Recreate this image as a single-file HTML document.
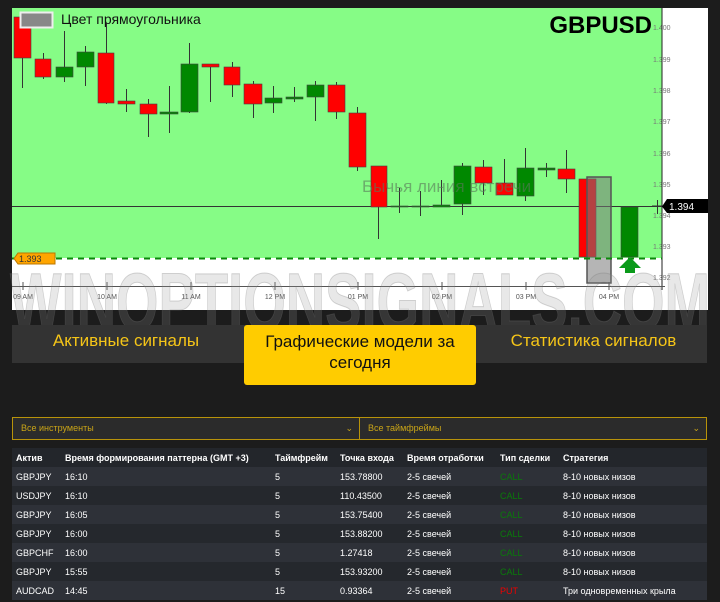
<!DOCTYPE html>
<html><head><meta charset="utf-8"><style>
*{margin:0;padding:0;box-sizing:border-box}
body{width:720px;height:602px;background:#1c1c1c;font-family:"Liberation Sans","DejaVu Sans",sans-serif;position:relative;overflow:hidden}
.abs{position:absolute}
.tabbar{left:12px;top:325px;width:695px;height:38px;background:#333}
.tab{color:#f5c518;font-size:17px;text-align:center}
.sel{top:417px;height:23px;background:#2b2b2b;border:1px solid #b8930a;color:#c9a417;font-size:9px;line-height:21px;padding-left:8px}
.sel span{position:absolute;right:6px;top:0;font-size:9px}
table{position:absolute;left:12px;top:448px;width:695px;border-collapse:collapse;font-size:9px;color:#fff}
td,th{height:19px;text-align:left;padding:0 0 0 4px;white-space:nowrap}
th{font-weight:bold;background:#23262b}
tr:nth-child(even) td{background:#2e3138}
tr:nth-child(odd) td{background:#25282d}
.c{color:#0a7a0a}.p{color:#e00}
</style></head><body>
<svg class="abs" style="left:0;top:0" width="720" height="320">
<rect x="12" y="8" width="696" height="302" fill="#fff"/>
<rect x="12" y="8" width="650" height="250" fill="#86fc86"/>
<g font-family="Liberation Sans" font-size="7" fill="#777">
<text x="653" y="30">1.400</text><text x="653" y="62">1.399</text><text x="653" y="93">1.398</text><text x="653" y="124">1.397</text><text x="653" y="156">1.396</text><text x="653" y="187">1.395</text><text x="653" y="218">1.394</text><text x="653" y="249">1.393</text><text x="653" y="280">1.392</text>
</g>
<line x1="662" y1="8" x2="662" y2="290" stroke="#222" stroke-width="1"/>
<line x1="12" y1="286.5" x2="665" y2="286.5" stroke="#555"/>
<g stroke="#555"><line x1="23" y1="282" x2="23" y2="290"/><line x1="107" y1="282" x2="107" y2="290"/><line x1="191" y1="282" x2="191" y2="290"/><line x1="275" y1="282" x2="275" y2="290"/><line x1="358" y1="282" x2="358" y2="290"/><line x1="442" y1="282" x2="442" y2="290"/><line x1="526" y1="282" x2="526" y2="290"/><line x1="609" y1="282" x2="609" y2="290"/></g>
<g font-family="Liberation Sans" font-size="7" fill="#555" text-anchor="middle">
<text x="23" y="299">09 AM</text><text x="107" y="299">10 AM</text><text x="191" y="299">11 AM</text><text x="275" y="299">12 PM</text><text x="358" y="299">01 PM</text><text x="442" y="299">02 PM</text><text x="526" y="299">03 PM</text><text x="609" y="299">04 PM</text>
</g>
<line x1="12" y1="206.5" x2="662" y2="206.5" stroke="#333" stroke-width="1"/>
<g stroke="#333" stroke-width="1">
<line x1="22.5" y1="17" x2="22.5" y2="88"/><line x1="43.5" y1="53" x2="43.5" y2="79"/><line x1="64.5" y1="31" x2="64.5" y2="82"/><line x1="85.5" y1="46" x2="85.5" y2="86"/><line x1="106.5" y1="23" x2="106.5" y2="104"/><line x1="126.5" y1="89" x2="126.5" y2="112"/><line x1="148.5" y1="99" x2="148.5" y2="137"/><line x1="169.5" y1="86" x2="169.5" y2="133"/><line x1="189.5" y1="43" x2="189.5" y2="113"/><line x1="210.5" y1="64" x2="210.5" y2="102"/><line x1="232.5" y1="62" x2="232.5" y2="97"/><line x1="253.5" y1="81" x2="253.5" y2="118"/><line x1="273.5" y1="86" x2="273.5" y2="113"/><line x1="294.5" y1="87" x2="294.5" y2="102"/><line x1="315.5" y1="81" x2="315.5" y2="121"/><line x1="336.5" y1="82" x2="336.5" y2="119"/><line x1="357.5" y1="107" x2="357.5" y2="171"/><line x1="378.5" y1="166" x2="378.5" y2="239"/><line x1="399.5" y1="188" x2="399.5" y2="213"/><line x1="420.5" y1="191" x2="420.5" y2="216"/><line x1="441.5" y1="180" x2="441.5" y2="207"/><line x1="462.5" y1="163" x2="462.5" y2="215"/><line x1="483.5" y1="160" x2="483.5" y2="195"/><line x1="504.5" y1="159" x2="504.5" y2="195"/><line x1="525.5" y1="148" x2="525.5" y2="201"/><line x1="546.5" y1="163" x2="546.5" y2="177"/><line x1="566.5" y1="150" x2="566.5" y2="193"/><line x1="657.5" y1="200" x2="657.5" y2="214"/>
<line x1="652" y1="206" x2="662" y2="206"/>
</g>
<g stroke="#444" stroke-width="0.6">
<rect x="14" y="17" width="17" height="41" fill="#f00"/><rect x="35" y="59" width="16" height="18" fill="#f00"/><rect x="56" y="67" width="17" height="10" fill="#080"/><rect x="77" y="52" width="17" height="15" fill="#080"/><rect x="98" y="53" width="16" height="50" fill="#f00"/><rect x="118" y="101" width="17" height="3" fill="#f00"/><rect x="140" y="104" width="17" height="10" fill="#f00"/><rect x="160" y="112" width="18" height="2" fill="#080"/><rect x="181" y="64" width="17" height="48" fill="#080"/><rect x="202" y="64" width="17" height="3" fill="#f00"/><rect x="224" y="67" width="16" height="18" fill="#f00"/><rect x="244" y="84" width="18" height="20" fill="#f00"/><rect x="265" y="98" width="17" height="5" fill="#080"/><rect x="286" y="97" width="17" height="2" fill="#080"/><rect x="307" y="85" width="17" height="12" fill="#080"/><rect x="328" y="85" width="17" height="27" fill="#f00"/><rect x="349" y="113" width="17" height="54" fill="#f00"/><rect x="371" y="166" width="16" height="41" fill="#f00"/><rect x="391" y="206" width="17" height="1" fill="#080"/><rect x="412" y="206" width="17" height="1" fill="#080"/><rect x="433" y="205" width="17" height="2" fill="#080"/><rect x="454" y="166" width="17" height="38" fill="#080"/><rect x="475" y="167" width="17" height="16" fill="#f00"/><rect x="496" y="183" width="17" height="12" fill="#f00"/><rect x="517" y="168" width="17" height="28" fill="#080"/><rect x="538" y="168" width="17" height="2" fill="#080"/><rect x="558" y="169" width="17" height="10" fill="#f00"/><rect x="579" y="179" width="17" height="78" fill="#f00"/><rect x="621" y="207" width="17" height="50" fill="#080"/>
</g>
<text x="362" y="192" font-family="Liberation Sans" font-size="17" fill="rgba(90,120,90,0.6)">Бычья линия встречи</text>
<rect x="587" y="177" width="24" height="106" fill="rgba(120,120,120,0.55)" stroke="#555" stroke-width="1.5"/>
<line x1="12" y1="258.5" x2="662" y2="258.5" stroke="#0a8a0a" stroke-width="2" stroke-dasharray="6,5"/>
<polygon points="630,257 641,268 635,268 635,273 625,273 625,268 619,268" fill="#0a9a1a"/>
<polygon points="14,258.5 18,253 55,253 55,264 18,264" fill="#ffa500" stroke="#b70"/>
<text x="19" y="262" font-family="Liberation Sans" font-size="9" fill="#333">1.393</text>
<polygon points="662,206.5 667,199 708,199 708,213 667,213" fill="#000"/>
<text x="669" y="210" font-family="Liberation Sans" font-size="10" fill="#fff">1.394</text>
<rect x="20.5" y="12.5" width="32" height="15" fill="#888" stroke="#eee" stroke-width="2"/>
<text x="61" y="24" font-family="Liberation Sans" font-size="14" fill="#111">Цвет прямоугольника</text>
<text x="652" y="33" text-anchor="end" font-family="Liberation Sans" font-weight="bold" font-size="24" fill="#000">GBPUSD</text>
</svg>
<svg class="abs" style="left:0;top:262px" width="720" height="70"><text x="360" y="68" text-anchor="middle" font-family="Liberation Sans" font-weight="bold" font-size="82" fill="rgba(150,150,150,0.22)" stroke="rgba(120,120,120,0.3)" stroke-width="1" textLength="700" lengthAdjust="spacingAndGlyphs">WINOPTIONSIGNALS.COM</text></svg>
<div class="abs tabbar"></div>
<div class="abs tab" style="left:12px;top:331px;width:228px">Активные сигналы</div>
<div class="abs tab" style="left:480px;top:331px;width:227px">Статистика сигналов</div>
<div class="abs" style="left:244px;top:325px;width:232px;height:60px;background:#ffcc00;border-radius:3px;color:#111;font-size:17px;text-align:center;line-height:21px;padding-top:6px">Графические модели за<br>сегодня</div>
<div class="abs sel" style="left:12px;width:348px">Все инструменты<span>⌄</span></div>
<div class="abs sel" style="left:359px;width:348px">Все таймфреймы<span>⌄</span></div>
<table>
<tr><th style="width:49px">Актив</th><th style="width:210px">Время формирования паттерна (GMT +3)</th><th style="width:65px">Таймфрейм</th><th style="width:67px">Точка входа</th><th style="width:93px">Время отработки</th><th style="width:63px">Тип сделки</th><th>Стратегия</th></tr>
<tr><td>GBPJPY</td><td>16:10</td><td>5</td><td>153.78800</td><td>2-5 свечей</td><td class="c">CALL</td><td>8-10 новых низов</td></tr>
<tr><td>USDJPY</td><td>16:10</td><td>5</td><td>110.43500</td><td>2-5 свечей</td><td class="c">CALL</td><td>8-10 новых низов</td></tr>
<tr><td>GBPJPY</td><td>16:05</td><td>5</td><td>153.75400</td><td>2-5 свечей</td><td class="c">CALL</td><td>8-10 новых низов</td></tr>
<tr><td>GBPJPY</td><td>16:00</td><td>5</td><td>153.88200</td><td>2-5 свечей</td><td class="c">CALL</td><td>8-10 новых низов</td></tr>
<tr><td>GBPCHF</td><td>16:00</td><td>5</td><td>1.27418</td><td>2-5 свечей</td><td class="c">CALL</td><td>8-10 новых низов</td></tr>
<tr><td>GBPJPY</td><td>15:55</td><td>5</td><td>153.93200</td><td>2-5 свечей</td><td class="c">CALL</td><td>8-10 новых низов</td></tr>
<tr><td>AUDCAD</td><td>14:45</td><td>15</td><td>0.93364</td><td>2-5 свечей</td><td class="p">PUT</td><td>Три одновременных крыла</td></tr>
</table>
</body></html>
